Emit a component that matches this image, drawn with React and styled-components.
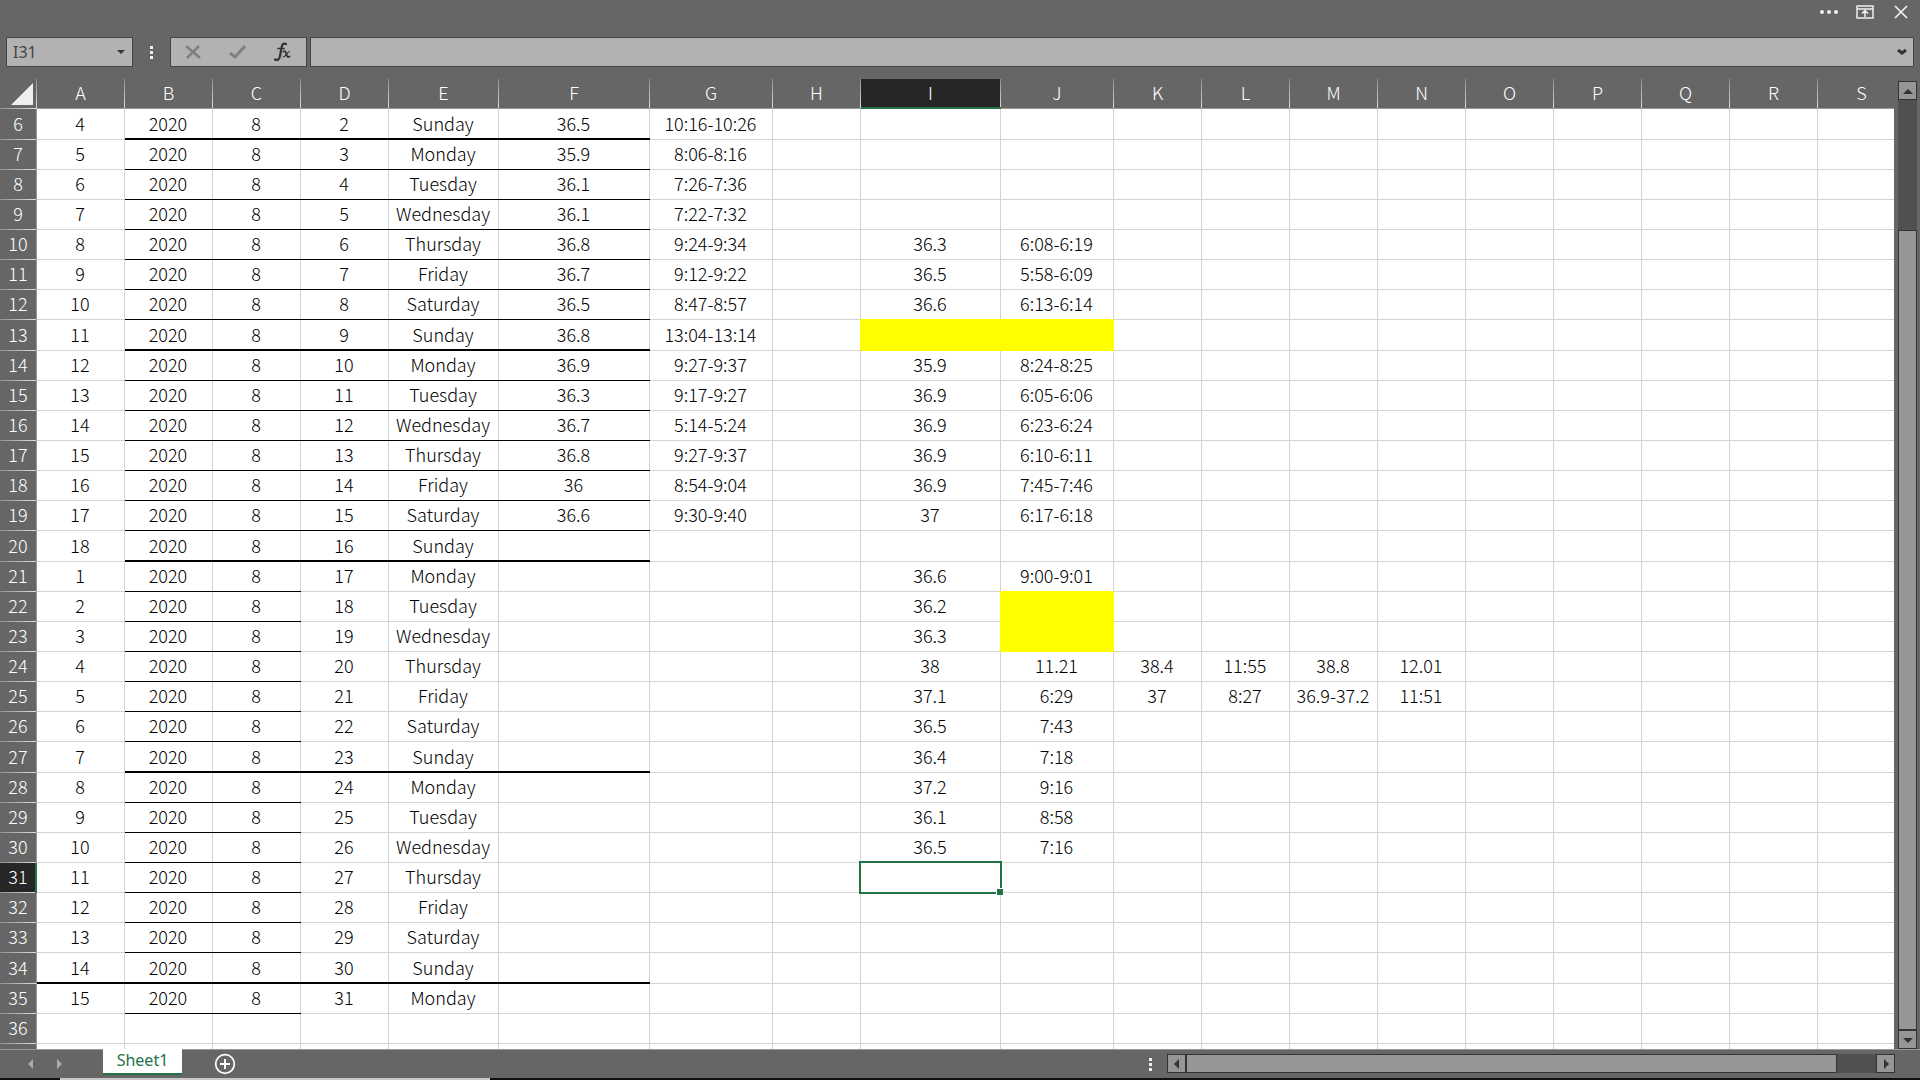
import React from 'react'
import styled, { createGlobalStyle, css } from 'styled-components'

const GlobalStyle = createGlobalStyle`
  * {
    box-sizing: border-box;
  }

  html,
  body,
  #root {
    height: 100%;
  }

  body {
    margin: 0;
    background: #666;
    color: #000;
    font-family: 'Noto Sans CJK JP', 'Noto Sans', sans-serif;
    font-weight: 300;
    overflow: hidden;
  }
`

const Window = styled.div`
  display: flex;
  flex-direction: column;
  height: 100vh;
  background: #666;
`

const TitleBar = styled.header`
  display: flex;
  justify-content: flex-end;
  gap: 16px;
  height: 37px;
  padding: 2px 9px 0 0;
`

const IconButton = styled.button`
  display: flex;
  align-items: center;
  justify-content: center;
  width: 20px;
  height: 20px;
  padding: 0;
  border: 0;
  background: none;
  color: #f0f0f0;
`

const FormulaRow = styled.div`
  display: flex;
  height: 30px;
  padding: 0 6px;
`

const fieldBox = css`
  height: 30px;
  border: 1px solid #444;
  background: #b2b2b2;
`

const NameBox = styled.div`
  ${fieldBox}
  display: flex;
  align-items: center;
  width: 127px;
`

const NameInput = styled.input`
  flex: 1;
  min-width: 0;
  padding: 0 0 0 6px;
  border: 0;
  background: none;
  color: #444;
  font-family: 'Noto Sans', sans-serif;
  font-size: 16px;
`

const DropButton = styled.button`
  display: flex;
  align-items: center;
  justify-content: center;
  width: 22px;
  height: 28px;
  padding: 0;
  border: 0;
  background: none;
  color: #333;
`

const Dots = styled.div`
  display: flex;
  flex-direction: column;
  align-items: center;
  justify-content: center;
  gap: 2px;
  width: 37px;

  i {
    width: 3px;
    height: 3px;
    background: #f0f0f0;
  }
`

const FormulaTools = styled.div`
  ${fieldBox}
  display: flex;
  align-items: center;
  justify-content: space-around;
  width: 137px;
  margin-right: 3px;
`

const ToolButton = styled.button`
  display: flex;
  padding: 0;
  border: 0;
  background: none;
  color: #808080;
`

const FormulaBox = styled.div`
  ${fieldBox}
  display: flex;
  flex: 1;
`

const FormulaInput = styled.input`
  flex: 1;
  border: 0;
  background: none;
`

const Body = styled.main`
  display: flex;
  flex: 1;
  min-height: 0;
  padding-top: 12px;
`

const SheetPane = styled.div`
  flex: 1;
  min-width: 0;
  overflow: hidden;
`

const SheetTable = styled.table`
  width: 1905px;
  table-layout: fixed;
  border-spacing: 0;
  background: #fff;
  font-size: 18px;
  line-height: 24px;
`

const Row = styled.tr`
  height: ${props => (props.$tall ? 31 : 30)}px;
`

const ColumnHead = styled.th`
  height: 30px;
  padding: 0 1px 4px 0;
  color: #fff;
  font-weight: 300;
  background:
    linear-gradient(#999, #999) bottom / 100% 1px no-repeat,
    linear-gradient(#909090, #e0e0e0) right / 1px 100% no-repeat,
    #666;
  ${props =>
    props.$active &&
    css`
      background:
        linear-gradient(#217346, #217346) bottom / 100% 2px no-repeat,
        linear-gradient(#909090, #e0e0e0) right / 1px 100% no-repeat,
        #262626;
    `}
`

const Corner = styled.th`
  padding: 0;
  background:
    linear-gradient(to right, #909090, #e0e0e0) bottom / 100% 1px no-repeat,
    linear-gradient(#909090, #e0e0e0) right / 1px 100% no-repeat,
    #666;

  svg {
    display: block;
    margin: 0 0 0 11px;
  }
`

const RowHead = styled.th`
  padding: 0 1px 4px 0;
  color: #fff;
  font-weight: 300;
  background:
    linear-gradient(#999, #999) right / 1px 100% no-repeat,
    linear-gradient(to right, #909090, #e0e0e0) bottom / 100% 1px no-repeat,
    #666;
  ${props =>
    props.$active &&
    css`
      background:
        linear-gradient(#217346, #217346) right / 2px 100% no-repeat,
        linear-gradient(to right, #909090, #e0e0e0) bottom / 100% 1px no-repeat,
        #262626;
    `}
`

const lines = {
  none: 'inset 0 -1px #d4d4d4',
  thin: 'inset 0 -1px #000',
  thick: 'inset 0 -2px #000',
}

const Cell = styled.td`
  position: relative;
  padding: 0 2px 4px 0;
  text-align: center;
  white-space: nowrap;
  box-shadow: ${props => lines[props.$line]}, inset -1px 0 #d4d4d4;
  ${props =>
    props.$marked &&
    css`
      background: #ff0;
      box-shadow: -1px -1px #ff0;
    `}
`

const Selection = styled.div`
  position: absolute;
  inset: -2px -1px -1px -2px;
  z-index: 1;
  border: 2px solid #217346;

  &::after {
    content: '';
    position: absolute;
    right: -3px;
    bottom: -3px;
    width: 6px;
    height: 6px;
    border: solid #fff;
    border-width: 1px 0 0 1px;
    background: #217346;
  }
`

const VerticalBar = styled.div`
  display: flex;
  flex-direction: column;
  width: 19px;
  margin: 2px 3px 0 4px;
  background: #505050;
`

const scrollPart = css`
  border: 1px solid #333;
  background: #969696;
`

const ScrollButton = styled.button`
  ${scrollPart}
  display: flex;
  align-items: center;
  justify-content: center;
  width: 19px;
  height: 19px;
  padding: 0;
  color: #333;
`

const VerticalTrack = styled.div`
  display: flex;
  flex: 1;
  flex-direction: column;
  padding-top: 130px;
`

const Thumb = styled.div`
  ${scrollPart}
  flex: 1;
`

const BottomBar = styled.footer`
  display: flex;
  height: 29px;
  border-top: 1px solid #999;
`

const SheetNav = styled.nav`
  display: flex;
  align-items: center;
  gap: 8px;
  width: 103px;
  padding-left: 21px;
`

const NavButton = styled(IconButton)`
  color: #aaa;
`

const Tab = styled.button`
  width: 79px;
  height: 26px;
  margin-top: -1px;
  padding: 0 0 2px;
  border: 0;
  border-bottom: 2px solid #217346;
  background: #fff;
  color: #217346;
  font-family: 'Noto Sans', sans-serif;
  font-size: 16px;
  line-height: 22px;
`

const AddButton = styled(IconButton)`
  width: 22px;
  height: 22px;
  margin: 3px 0 0 32px;
`

const HorizontalBar = styled.div`
  display: flex;
  width: 728px;
  height: 19px;
  margin: 4px 25px 0 0;
  background: #505050;
`

const HorizontalTrack = styled.div`
  display: flex;
  flex: 1;
  padding-right: 39px;
`

const FooterDots = styled(Dots)`
  width: 33px;
  height: 28px;
  margin-left: auto;
`

const Taskbar = styled.div`
  display: flex;
  height: 2px;
  background: #101010;

  &::before {
    content: '';
    width: 430px;
    margin-left: 60px;
    background: #c8c8c8;
  }
`

const columns = [
  ['A', 88], ['B', 88], ['C', 88], ['D', 88], ['E', 110], ['F', 151], ['G', 123],
  ['H', 88], ['I', 140], ['J', 113], ['K', 88], ['L', 88], ['M', 88], ['N', 88],
  ['O', 88], ['P', 88], ['Q', 88], ['R', 88], ['S', 88],
]

const weekdays = ['Sunday', 'Monday', 'Tuesday', 'Wednesday', 'Thursday', 'Friday', 'Saturday']

// columns F and G, keyed by row number
const readings = {
  6: ['36.5', '10:16-10:26'],
  7: ['35.9', '8:06-8:16'],
  8: ['36.1', '7:26-7:36'],
  9: ['36.1', '7:22-7:32'],
  10: ['36.8', '9:24-9:34'],
  11: ['36.7', '9:12-9:22'],
  12: ['36.5', '8:47-8:57'],
  13: ['36.8', '13:04-13:14'],
  14: ['36.9', '9:27-9:37'],
  15: ['36.3', '9:17-9:27'],
  16: ['36.7', '5:14-5:24'],
  17: ['36.8', '9:27-9:37'],
  18: ['36', '8:54-9:04'],
  19: ['36.6', '9:30-9:40'],
}

// columns I onwards
const evening = {
  10: ['36.3', '6:08-6:19'],
  11: ['36.5', '5:58-6:09'],
  12: ['36.6', '6:13-6:14'],
  14: ['35.9', '8:24-8:25'],
  15: ['36.9', '6:05-6:06'],
  16: ['36.9', '6:23-6:24'],
  17: ['36.9', '6:10-6:11'],
  18: ['36.9', '7:45-7:46'],
  19: ['37', '6:17-6:18'],
  21: ['36.6', '9:00-9:01'],
  22: ['36.2'],
  23: ['36.3'],
  24: ['38', '11.21', '38.4', '11:55', '38.8', '12.01'],
  25: ['37.1', '6:29', '37', '8:27', '36.9-37.2', '11:51'],
  26: ['36.5', '7:43'],
  27: ['36.4', '7:18'],
  28: ['37.2', '9:16'],
  29: ['36.1', '8:58'],
  30: ['36.5', '7:16'],
}

const marked = ['I13', 'J13', 'J22', 'J23']

const rows = Array.from({ length: 32 }, (_, i) => i + 6)

const isWeekEnd = row => row < 35 && (row - 6) % 7 === 0

const getValue = (row, col) => {
  if (col >= 8) return (evening[row] || [])[col - 8]
  if (col === 5 || col === 6) return (readings[row] || [])[col - 5]
  if (row > 35) return undefined
  return [row < 21 ? row - 2 : row - 20, 2020, 8, row - 4, weekdays[(row - 6) % 7]][col]
}

const getLine = (row, col) => {
  if (row > 35 || col > 5) return 'none'
  if (isWeekEnd(row) && (col > 0 || row === 34)) return 'thick'
  if (col === 0) return 'none'
  return row < 21 || col < 3 ? 'thin' : 'none'
}

const Arrow = ({ d }) => (
  <svg width="10" height="10" viewBox="0 0 10 10" fill="currentColor" aria-hidden="true">
    <path d={d} />
  </svg>
)

const UP = 'M0 8h10L5 3z'
const DOWN = 'M0 3h10L5 8z'
const LEFT = 'M7 0v10L2 5z'
const RIGHT = 'M3 0v10l5-5z'

const Sheet = () => (
  <SheetPane>
    <SheetTable>
      <colgroup>
        <col style={{ width: 37 }} />
        {columns.map(([name, width]) => (
          <col key={name} style={{ width }} />
        ))}
      </colgroup>
      <thead>
        <tr>
          <Corner aria-label="Select all">
            <svg width="22" height="22" viewBox="0 0 22 22" aria-hidden="true">
              <path d="M22 0v22H0z" fill="#f0f0f0" />
            </svg>
          </Corner>
          {columns.map(([name]) => (
            <ColumnHead key={name} scope="col" $active={name === 'I'}>{name}</ColumnHead>
          ))}
        </tr>
      </thead>
      <tbody>
        {rows.map(row => (
          <Row key={row} $tall={isWeekEnd(row)}>
            <RowHead scope="row" $active={row === 31}>{row < 37 && row}</RowHead>
            {columns.map(([name], col) => (
              <Cell key={name} $line={getLine(row, col)} $marked={marked.includes(name + row)}>
                {getValue(row, col)}
                {name + row === 'I31' && <Selection />}
              </Cell>
            ))}
          </Row>
        ))}
      </tbody>
    </SheetTable>
  </SheetPane>
)

const App = () => (
  <Window>
    <GlobalStyle />
    <TitleBar>
      <IconButton aria-label="More">
        <svg width="20" height="20" fill="currentColor">
          <circle cx="3" cy="10" r="2" />
          <circle cx="10" cy="10" r="2" />
          <circle cx="17" cy="10" r="2" />
        </svg>
      </IconButton>
      <IconButton aria-label="Ribbon display options">
        <svg width="18" height="14" fill="none" stroke="currentColor">
          <rect x="1" y="1" width="16" height="12" strokeWidth="1.5" />
          <path d="M1 4h16M9 12V6M6 8.5l3-3 3 3" strokeWidth="1.5" />
        </svg>
      </IconButton>
      <IconButton aria-label="Close">
        <svg width="14" height="14" fill="none" stroke="currentColor" strokeWidth="1.7">
          <path d="M1 1l12 12M13 1L1 13" />
        </svg>
      </IconButton>
    </TitleBar>
    <FormulaRow>
      <NameBox>
        <NameInput aria-label="Name box" defaultValue="I31" />
        <DropButton aria-label="Cell names">
          <svg width="8" height="4" fill="currentColor"><path d="M0 0h8L4 4z" /></svg>
        </DropButton>
      </NameBox>
      <Dots><i /><i /><i /></Dots>
      <FormulaTools>
        <ToolButton aria-label="Cancel">
          <svg width="16" height="14" fill="none" stroke="currentColor" strokeWidth="2.5">
            <path d="M1 1l14 12M14 1L2 13" />
          </svg>
        </ToolButton>
        <ToolButton aria-label="Enter">
          <svg width="18" height="14" fill="none" stroke="currentColor" strokeWidth="3">
            <path d="M2 8l5 4L17 1" />
          </svg>
        </ToolButton>
        <ToolButton aria-label="Insert function">
          <svg width="18" height="20" fill="none" stroke="#333" strokeLinecap="round">
            <path d="M12 2c-3-1.5-4 1-4.500 4L6 14c-.5 3-2.500 5-5 3.500" strokeWidth="2.2" />
            <path d="M4 6.5h6M9.500 9.500c2-1 2 0 3 3s1.500 3 3 2" strokeWidth="1.7" />
            <path d="M15.500 9.500c-2 0-4 5.500-6.500 5.500" strokeWidth="1.2" />
          </svg>
        </ToolButton>
      </FormulaTools>
      <FormulaBox>
        <FormulaInput aria-label="Formula" />
        <DropButton aria-label="Expand formula bar">
          <svg width="10" height="7" fill="none" stroke="currentColor" strokeWidth="3">
            <path d="M1 1l4 3 4-3" />
          </svg>
        </DropButton>
      </FormulaBox>
    </FormulaRow>
    <Body>
      <Sheet />
      <VerticalBar>
        <ScrollButton aria-label="Scroll up"><Arrow d={UP} /></ScrollButton>
        <VerticalTrack><Thumb /></VerticalTrack>
        <ScrollButton aria-label="Scroll down"><Arrow d={DOWN} /></ScrollButton>
      </VerticalBar>
    </Body>
    <BottomBar>
      <SheetNav>
        <NavButton aria-label="Previous sheet"><Arrow d={LEFT} /></NavButton>
        <NavButton aria-label="Next sheet"><Arrow d={RIGHT} /></NavButton>
      </SheetNav>
      <Tab>Sheet1</Tab>
      <AddButton aria-label="New sheet">
        <svg width="22" height="22" fill="none" stroke="#fff">
          <circle cx="11" cy="11" r="9.3" strokeWidth="1.7" />
          <path d="M11 6v10M6 11h10" strokeWidth="2" />
        </svg>
      </AddButton>
      <FooterDots><i /><i /><i /></FooterDots>
      <HorizontalBar>
        <ScrollButton aria-label="Scroll left"><Arrow d={LEFT} /></ScrollButton>
        <HorizontalTrack><Thumb /></HorizontalTrack>
        <ScrollButton aria-label="Scroll right"><Arrow d={RIGHT} /></ScrollButton>
      </HorizontalBar>
    </BottomBar>
    <Taskbar />
  </Window>
)

export default App
